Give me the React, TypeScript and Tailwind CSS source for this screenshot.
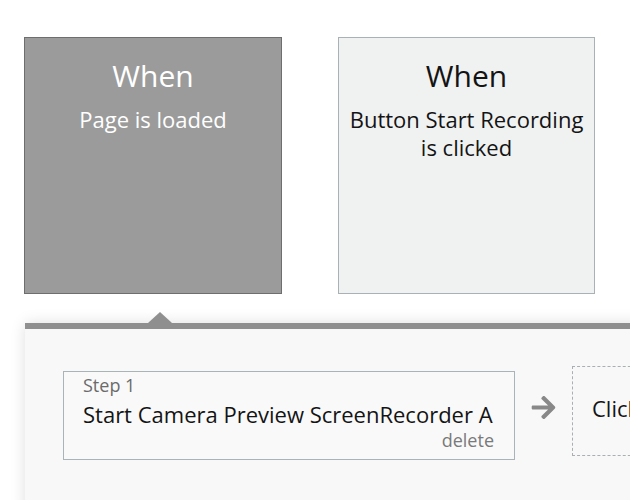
import { FaArrowRight } from 'react-icons/fa'

const font = { fontFamily: '"Open Sans", "Noto Sans", sans-serif' }

function TriggerCard({ title, subtitle, active }: { title: string; subtitle: string; active?: boolean }) {
  return (
    <div
      className={
        active
          ? 'shrink-0 w-[258px] h-[257px] border border-[#6e6e6e] bg-[#9b9b9b] text-white flex flex-col items-center pt-[18px] text-center'
          : 'shrink-0 w-[257px] h-[257px] border border-[#a8b2b4] bg-[#f0f2f2] text-[#141414] flex flex-col items-center pt-[18px] text-center'
      }
    >
      <div className="text-[30px] leading-[40px]">{title}</div>
      <div className="mt-[9px] text-[22px] leading-[28px] whitespace-pre-line">{subtitle}</div>
    </div>
  )
}

export default function App() {
  return (
    <div className="w-[630px] h-[500px] overflow-hidden bg-white" style={font}>
      <div className="flex gap-[56px] pt-[37px] pl-[24px]">
        <TriggerCard title="When" subtitle="Page is loaded" active />
        <TriggerCard title="When" subtitle={'Button Start Recording\nis clicked'} />
      </div>

      <div className="relative mt-[29px] ml-[25px] w-[700px] h-[200px] border-t-[6px] border-[#8f8f8f] bg-[#f8f8f8] shadow-[0_0_14px_rgba(0,0,0,0.13)]">
        <div className="absolute left-[123px] -top-[17px] w-0 h-0 border-l-[12px] border-r-[12px] border-b-[11px] border-l-transparent border-r-transparent border-b-[#8f8f8f]" />
        <div className="flex items-start pt-[42px] pl-[38px]">
          <div className="shrink-0 w-[452px] h-[89px] border border-[#a9b4b7] bg-[#f9f9f9] flex flex-col pl-[19px] pr-[20px] pt-[2px]">
            <div className="text-[18px] leading-[22px] text-[#6b6b6b]">Step 1</div>
            <div className="mt-[4px] text-[22px] leading-[28px] text-[#141414] whitespace-nowrap">
              Start Camera Preview ScreenRecorder A
            </div>
            <div className="mt-[1px] text-[18px] leading-[22px] text-[#7a7a7a] text-right">delete</div>
          </div>
          <div className="shrink-0 ml-[15px] mt-[23px] text-[#888888]">
            <FaArrowRight size={27} />
          </div>
          <div className="shrink-0 ml-[15px] -mt-[5px] w-[140px] h-[90px] border border-dashed border-[#a9b0b3] pl-[19px] pt-[27px]">
            <span className="block text-[22px] leading-[28px] text-[#141414]">Click</span>
          </div>
        </div>
      </div>
    </div>
  )
}
